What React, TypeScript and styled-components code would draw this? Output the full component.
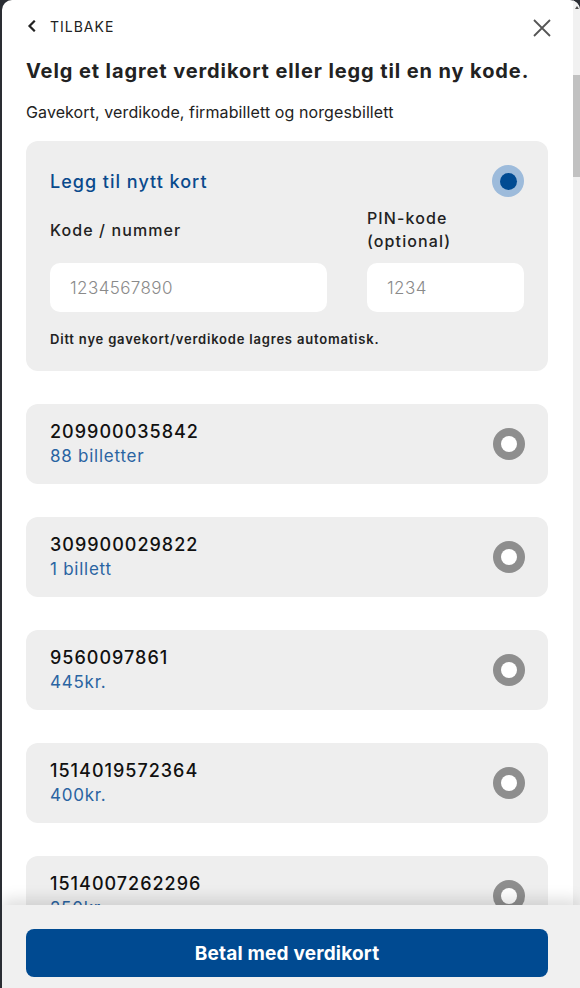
import React from "react";
import styled, { createGlobalStyle } from "styled-components";

const GlobalStyle = createGlobalStyle`
  html, body {
    margin: 0;
    padding: 0;
  }
  body {
    background: #2a2d33;
    font-family: Inter, "Noto Sans", "DejaVu Sans", sans-serif;
    color: #222;
  }
  * { box-sizing: border-box; }
`;

const Panel = styled.div`
  margin-left: 2px;
  width: 578px;
  height: 988px;
  background: #fff;
  border-radius: 10px 10px 0 0;
  display: flex;
  flex-direction: column;
  overflow: hidden;
`;

const ScrollArea = styled.div`
  height: 905px;
  display: flex;
  overflow: hidden;
`;

const Content = styled.div`
  flex: 1;
  padding: 14px 25px 0 24px;
  display: flex;
  flex-direction: column;
`;

const Track = styled.div`
  width: 7px;
  background: #f1f1f1;
  display: flex;
  flex-direction: column;
  align-items: center;
  padding-top: 6px;
`;

const TrackArrow = styled.div`
  width: 0;
  height: 0;
  border-left: 2.5px solid transparent;
  border-right: 2.5px solid transparent;
  border-bottom: 3px solid #505050;
`;

const Thumb = styled.div`
  margin-top: 66px;
  width: 7px;
  height: 102px;
  background: #c1c1c1;
`;

const HeaderRow = styled.div`
  height: 24px;
  display: flex;
  align-items: center;
  justify-content: space-between;
`;

const BackButton = styled.button`
  border: 0;
  background: none;
  padding: 0 0 0 1px;
  display: flex;
  align-items: center;
  gap: 14px;
  font-family: inherit;
  font-size: 14px;
  font-weight: 400;
  letter-spacing: 1px;
  color: #222;
  cursor: pointer;
`;

const CloseButton = styled.button`
  border: 0;
  background: none;
  padding: 0;
  margin-right: -4px;
  margin-top: 4px;
  display: flex;
  cursor: pointer;
`;

const Heading = styled.h1`
  margin: 19px 0 0;
  font-size: 20px;
  line-height: 28px;
  font-weight: 700;
  color: #222;
  letter-spacing: 0.9px;
  white-space: nowrap;
`;

const Subtitle = styled.p`
  margin: 16px 0 0;
  font-size: 16px;
  line-height: 22px;
  font-weight: 400;
  color: #222;
  letter-spacing: 0.1px;
`;

const NewCardBox = styled.div`
  margin-top: 18px;
  background: #eeeeee;
  border-radius: 12px;
  padding: 24px 24px 23px 24px;
`;

const TitleRow = styled.div`
  height: 32px;
  display: flex;
  align-items: center;
  justify-content: space-between;
`;

const BoxTitle = styled.div`
  font-size: 18px;
  font-weight: 500;
  color: #0a4a8c;
  letter-spacing: 1px;
`;

const Radio = styled.span<{ $checked?: boolean }>`
  width: 32px;
  height: 32px;
  border-radius: 50%;
  flex: none;
  display: flex;
  align-items: center;
  justify-content: center;
  background: ${(p) => (p.$checked ? "#9dbbdb" : "#8e8e8e")};
  &::after {
    content: "";
    width: ${(p) => (p.$checked ? "17px" : "16px")};
    height: ${(p) => (p.$checked ? "17px" : "16px")};
    border-radius: 50%;
    background: ${(p) => (p.$checked ? "#004b93" : "#fff")};
  }
`;

const FieldGrid = styled.div`
  margin-top: 10px;
  display: grid;
  grid-template-columns: 277px 157px;
  column-gap: 40px;
  row-gap: 10px;
  align-items: center;
`;

const FieldLabel = styled.label`
  font-size: 16px;
  line-height: 23px;
  font-weight: 500;
  color: #222;
  letter-spacing: 1.1px;
`;

const Input = styled.input`
  width: 100%;
  height: 49px;
  border: 0;
  border-radius: 10px;
  background: #fff;
  padding: 0 20px;
  font-family: inherit;
  font-size: 17px;
  font-weight: 300;
  letter-spacing: 0.4px;
  color: #222;
  outline: none;
  &::placeholder {
    color: #8a8a8a;
  }
`;

const Note = styled.div`
  margin-top: 18px;
  font-size: 13px;
  line-height: 18px;
  font-weight: 600;
  color: #222;
  letter-spacing: 0.8px;
`;

const CardList = styled.div`
  margin-top: 33px;
  display: flex;
  flex-direction: column;
  gap: 33px;
`;

const Card = styled.div`
  flex: none;
  height: 80px;
  background: #eeeeee;
  border-radius: 12px;
  padding: 0 23px 0 24px;
  display: flex;
  align-items: center;
  justify-content: space-between;
`;

const CardText = styled.div`
  display: flex;
  flex-direction: column;
  margin-top: -1px;
`;

const CardNumber = styled.div`
  font-size: 18px;
  line-height: 25px;
  font-weight: 500;
  color: #111;
  letter-spacing: 1px;
`;

const CardValue = styled.div`
  font-size: 17px;
  line-height: 25px;
  font-weight: 400;
  color: #2a64a2;
  letter-spacing: 0.75px;
`;

const Footer = styled.div`
  position: relative;
  z-index: 1;
  height: 83px;
  background: #f0f0f0;
  padding: 24px 32px 11px 24px;
  box-shadow: 0 -6px 14px rgba(0, 0, 0, 0.13);
`;

const PayButton = styled.button`
  width: 100%;
  height: 48px;
  border: 0;
  border-radius: 8px;
  background: #004a91;
  color: #fff;
  font-family: inherit;
  font-size: 19px;
  font-weight: 700;
  letter-spacing: 0.2px;
  cursor: pointer;
`;

const cards = [
  { number: "209900035842", value: "88 billetter" },
  { number: "309900029822", value: "1 billett" },
  { number: "9560097861", value: "445kr." },
  { number: "1514019572364", value: "400kr." },
  { number: "1514007262296", value: "250kr." },
];

export default function App() {
  return (
    <>
      <GlobalStyle />
      <Panel>
        <ScrollArea>
          <Content>
            <HeaderRow>
              <BackButton>
                <svg width="9" height="12" viewBox="0 0 9 12" fill="none">
                  <path d="M7 1.5L2.5 6L7 10.5" stroke="#222" strokeWidth="2.2" strokeLinecap="square" />
                </svg>
                TILBAKE
              </BackButton>
              <CloseButton aria-label="Lukk">
                <svg width="20" height="20" viewBox="0 0 20 20" fill="none">
                  <path d="M2 2L18 18M18 2L2 18" stroke="#555" strokeWidth="1.8" />
                </svg>
              </CloseButton>
            </HeaderRow>
            <Heading>Velg et lagret verdikort eller legg til en ny kode.</Heading>
            <Subtitle>Gavekort, verdikode, firmabillett og norgesbillett</Subtitle>
            <NewCardBox>
              <TitleRow>
                <BoxTitle>Legg til nytt kort</BoxTitle>
                <Radio $checked />
              </TitleRow>
              <FieldGrid>
                <FieldLabel>Kode / nummer</FieldLabel>
                <FieldLabel>
                  PIN-kode
                  <br />
                  (optional)
                </FieldLabel>
                <Input placeholder="1234567890" />
                <Input placeholder="1234" />
              </FieldGrid>
              <Note>Ditt nye gavekort/verdikode lagres automatisk.</Note>
            </NewCardBox>
            <CardList>
              {cards.map((c) => (
                <Card key={c.number}>
                  <CardText>
                    <CardNumber>{c.number}</CardNumber>
                    <CardValue>{c.value}</CardValue>
                  </CardText>
                  <Radio />
                </Card>
              ))}
            </CardList>
          </Content>
          <Track>
            <TrackArrow />
            <Thumb />
          </Track>
        </ScrollArea>
        <Footer>
          <PayButton>Betal med verdikort</PayButton>
        </Footer>
      </Panel>
    </>
  );
}
